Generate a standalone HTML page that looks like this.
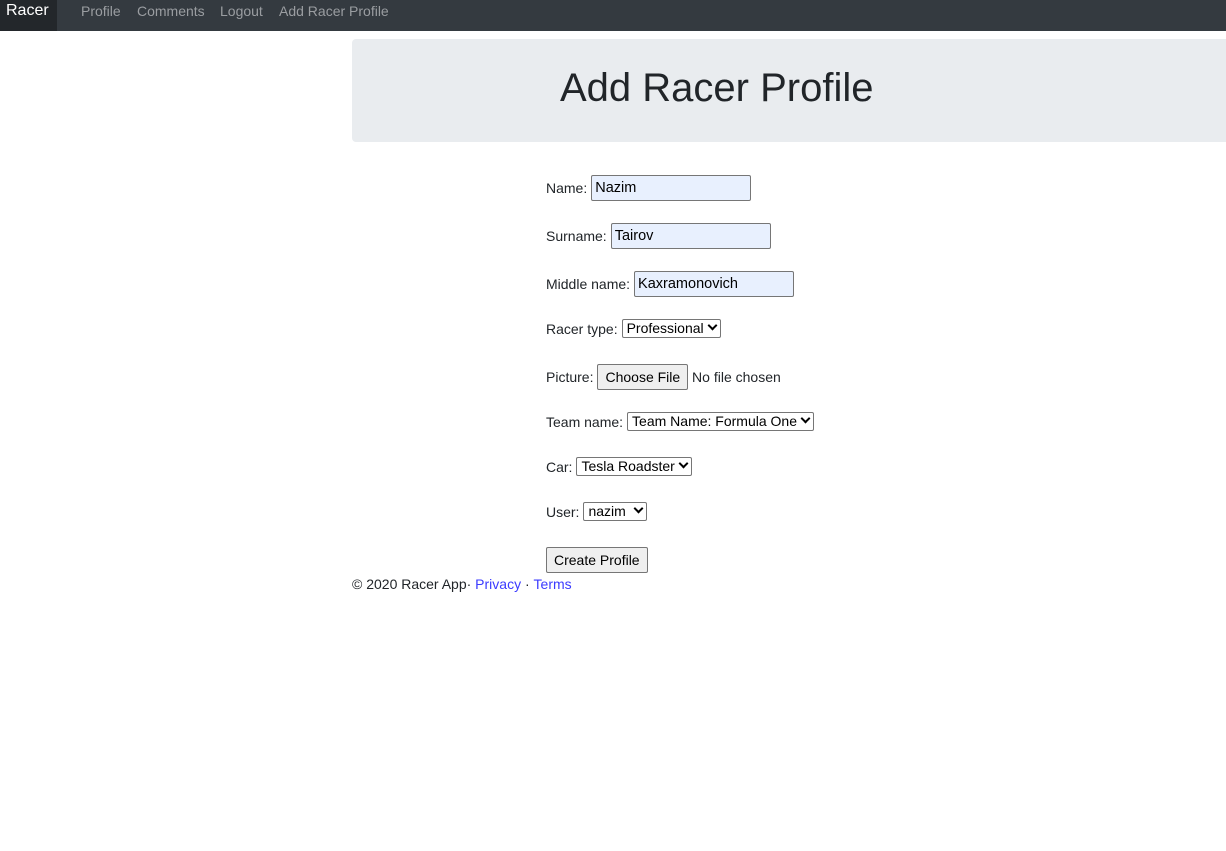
<!DOCTYPE html>
<html><head><style>
*{box-sizing:border-box;margin:0;padding:0}
body{width:1226px;height:851px;background:#fff;font-family:"Liberation Sans",Arial,sans-serif;color:#212529;position:relative;overflow:hidden}
.nav{position:absolute;left:0;top:0;width:1226px;height:31px;background:#343a40}
.brand{position:absolute;left:0;top:0;width:57px;height:31px;background:#23272b;color:#fff;font-size:16px;line-height:22px;padding-left:6px}
.nl{position:absolute;top:3px;color:#9a9da1;font-size:14px;line-height:17px}
.jumbo{position:absolute;left:352px;top:39px;width:880px;height:103px;background:#e9ecef;border-radius:4px}
.jumbo h1{position:absolute;left:208px;top:27px;font-size:40px;font-weight:400;line-height:44px;color:#212529}
.r{position:absolute;left:546px;font-size:14px;line-height:16px;display:flex;align-items:center;white-space:nowrap}
.inp{display:inline-block;width:160px;height:26px;background:#e8f0fe;border:1px solid #767676;border-radius:2px;margin-left:4px;padding:2px 3px;font-size:14.5px;line-height:20px;color:#000}
.sel{display:inline-block;height:19px;border:1px solid #767676;border-radius:2px;margin-left:4px;padding:0 3px 0 4px;font-size:14px;line-height:17px;color:#000;background:#fff}
.sel:after{content:"";display:inline-block;width:5px;height:5px;border-right:2px solid #000;border-bottom:2px solid #000;transform:rotate(45deg);margin:0 1px 4px 5px}
.btn{display:inline-block;height:26px;border:1px solid #767676;border-radius:2px;background:#efefef;padding:0 7px;font-size:14px;line-height:24px;color:#000}
a{color:#3b3bff;text-decoration:none}
</style></head><body>
<div class="nav">
<div class="brand">Racer</div>
<div class="nl" style="left:81px">Profile</div>
<div class="nl" style="left:137px">Comments</div>
<div class="nl" style="left:220px">Logout</div>
<div class="nl" style="left:279px">Add Racer Profile</div>
</div>
<div class="jumbo"><h1>Add Racer Profile</h1></div>
<div class="r" style="top:175px">Name: <span class="inp">Nazim</span></div>
<div class="r" style="top:223px">Surname: <span class="inp">Tairov</span></div>
<div class="r" style="top:271px">Middle name: <span class="inp">Kaxramonovich</span></div>
<div class="r" style="top:319px">Racer type: <span class="sel">Professional</span></div>
<div class="r" style="top:364px">Picture: <span class="btn" style="margin-left:4px">Choose File</span>&nbsp;No file chosen</div>
<div class="r" style="top:412px">Team name: <span class="sel">Team Name: Formula One</span></div>
<div class="r" style="top:457px">Car: <span class="sel">Tesla Roadster</span></div>
<div class="r" style="top:502px">User: <span class="sel">nazim </span></div>
<div class="r" style="top:547px"><span class="btn">Create Profile</span></div>
<div class="r" style="top:576px;left:352px">© 2020 Racer App·&nbsp;<a>Privacy</a>&nbsp;·&nbsp;<a>Terms</a></div>
</body></html>
